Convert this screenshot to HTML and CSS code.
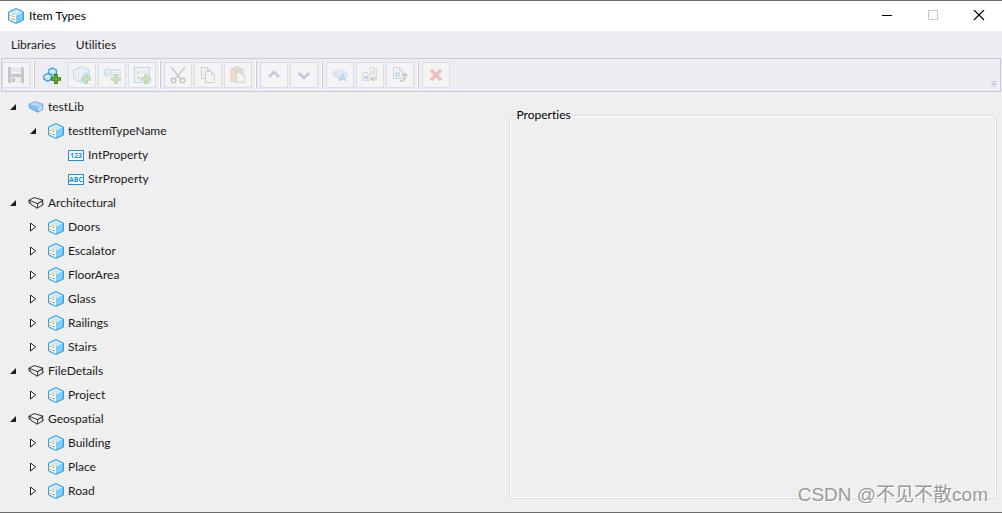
FILE: index.html
```
<!DOCTYPE html>
<html lang="en">
<head>
<meta charset="utf-8">
<title>Item Types</title>
<link rel="stylesheet" href="styles.css">
</head>
<body>
<svg class="defs" aria-hidden="true">
  <symbol id="cube" viewBox="0 0 16 16">
    <path d="M8 .6 15.400 4v8L8 15.400.6 12V4z" fill="#ecf7fe"/>
    <path d="M8 .6 15.400 4 8 7.600.6 4z" fill="#cdeafd"/>
    <path d="M8 7.600 15.400 4v8L8 15.400z" fill="#80cbfc"/>
    <path d="M8 .6 15.400 4v8L8 15.400.6 12V4z" fill="none" stroke="#1c93e3"/>
    <path d="M2 7.500h1.500M2 10.500h1.500" stroke="#f29a2e"/>
    <path d="M4.500 8.500h2" stroke="#f29a2e"/>
    <path d="M4.500 11.500h2" stroke="#4caf50"/>
    <path d="M4.500 6.500h1" stroke="#4caf50"/>
  </symbol>
  <symbol id="book-blue" viewBox="0 0 16 16">
    <path d="M1 5.200 6.500 2.500 15 5.200v5L9.500 13.500 1.500 9.500z" fill="#8fc0f5"/>
    <path d="M1 5.200 6.500 2.600 15 5.200 9.500 8.600z" fill="#b5dafc" stroke="#6ba9ea" stroke-width=".8"/>
    <path d="M9.500 8.800 14.500 6v3.800l-5 3z" fill="#c9e0f9"/>
    <path d="M1 5.200.8 8l8.700 5.300L15 10.200M9.500 8.600v4.500M14.800 5.300v4.700" fill="none" stroke="#5f98e0" stroke-width=".8"/>
  </symbol>
  <symbol id="book" viewBox="0 0 16 16">
    <path d="M1 5.200 6 2.600l9 2.500-5.200 3.600zM1 5.200v2.600l8 5.500 6-3.600V8M9.800 8.700 15 5.200M1 5.200l1.800 3.600M9.800 8.700l-.6 4.300M14.800 5.200l-.5 4.500" fill="none" stroke="#333"/>
  </symbol>
  <symbol id="open" viewBox="0 0 8 8"><path d="M7 1v6H1z" fill="#1c1c1c"/></symbol>
  <symbol id="closed" viewBox="0 0 8 10"><path d="M1.500 1v8l5-4z" fill="#fff" stroke="#222"/></symbol>
  <symbol id="plus" viewBox="0 0 8 8"><path d="M3 .5h2V3h2.500v2H5v2.500H3V5H.5V3H3z" fill="#65b832" stroke="#397e17" stroke-width=".9"/></symbol>
  <symbol id="page" viewBox="0 0 10 12"><path d="M.5.5h6l3 3v8h-9z" fill="#f1f1f1" stroke="#777"/><path d="M6.500.5v3h3" fill="none" stroke="#777"/></symbol>
</svg>
<div class="window">
  <header class="titlebar">
    <svg class="app-icon"><use href="#cube"/></svg>
    <h1 class="title">Item Types</h1>
    <button class="caption" aria-label="Minimize"><svg viewBox="0 0 12 12"><path d="M1 5.500h10" stroke="#000"/></svg></button>
    <button class="caption" aria-label="Maximize" disabled><svg viewBox="0 0 12 12"><path d="M1.500.5h9v9h-9z" fill="none" stroke="#c8c8c8"/></svg></button>
    <button class="caption" aria-label="Close"><svg viewBox="0 0 12 12"><path d="m1 0 10 10M11 0 1 10" stroke="#000" stroke-width="1.200"/></svg></button>
  </header>
  <nav class="menubar">
    <button class="menu">Libraries</button>
    <button class="menu">Utilities</button>
  </nav>
  <div class="toolbar" role="toolbar" aria-label="Item type tools">
    <button class="tool" disabled aria-label="Save"><svg viewBox="0 0 18 18"><path d="M1 1h15l1 1v15H1z" fill="#555"/><path d="M4 1h10v7H4z" fill="#e9e9e9"/><path d="M4 3h10M4 5h10" stroke="#bbb"/><path d="M4 11h10v6H4z" fill="#ddd"/><path d="M5 12h3v4H5z" fill="#444"/></svg></button>
    <span class="sep"></span>
    <button class="tool" aria-label="Add library"><svg viewBox="0 0 18 18"><g fill="#c9e9fd" stroke="#2494e6" stroke-width="1.200"><path d="m9.500 2 3.800 1.800v4L9.500 9.600 5.800 7.800v-4z"/><path d="m4.800 7.500 3.700 1.800v4l-3.700 1.800L1 13.300v-4z"/><path d="m10 8 3 1.500v3l-3 1.500-2-1z"/></g><path d="m6.500 5 3 1.500V9M1.800 10.600l3 1.400v2" fill="none" stroke="#fff"/><path d="M8 7h1.500M3.500 12.500H5" stroke="#eca94e"/><use href="#plus" x="8" y="8" width="10" height="10"/></svg></button>
    <button class="tool" disabled aria-label="Add item type"><svg viewBox="0 0 18 18"><use href="#cube" width="17" height="17"/><use href="#plus" x="8" y="8" width="10" height="10"/></svg></button>
    <button class="tool" disabled aria-label="Add property"><svg viewBox="0 0 18 18"><path d="M7.500 4H17v5H7.500" fill="#e9f6ff" stroke="#2d98df" stroke-width="1.200"/><circle cx="4.500" cy="6.500" r="3.500" fill="#d6efff" stroke="#2d98df" stroke-width="1.200"/><circle cx="4.500" cy="6.500" r="1.500" fill="#f29a2e"/><path d="M10 6.500h4" stroke="#f29a2e"/><use href="#plus" x="8" y="8" width="10" height="10"/></svg></button>
    <button class="tool" disabled aria-label="Add property set"><svg viewBox="0 0 18 18"><path d="M1.500 1.500h15v15h-15z" fill="#e0f3ff" stroke="#2d98df" stroke-width="1.200"/><path d="M4 6h3M4 12h3" stroke="#ee7b30" stroke-width="2.500"/><path d="M9 6h6M9 12h3" stroke="#ee9b45"/><use href="#plus" x="8" y="8" width="10" height="10"/></svg></button>
    <span class="sep"></span>
    <button class="tool" disabled aria-label="Cut"><svg viewBox="0 0 18 18"><path d="m2 1 10 12M16 1 6 13" stroke="#666" stroke-width="1.600"/><circle cx="4.500" cy="14.500" r="2.300" fill="none" stroke="#555" stroke-width="1.500"/><circle cx="13.500" cy="14.500" r="2.300" fill="none" stroke="#555" stroke-width="1.500"/></svg></button>
    <button class="tool" disabled aria-label="Copy"><svg viewBox="0 0 18 18"><use href="#page" x="2" y="1" width="10" height="12"/><use href="#page" x="6" y="5" width="10" height="12"/></svg></button>
    <button class="tool" disabled aria-label="Paste"><svg viewBox="0 0 18 18"><path d="M2 2.500h12v13H2z" fill="#e6a252" stroke="#b98145"/><path d="M5 4V2h1.500V1h3v1H11v2z" fill="#ddd" stroke="#666"/><use href="#page" x="7" y="6" width="9" height="11"/></svg></button>
    <span class="sep"></span>
    <button class="tool" disabled aria-label="Move up"><svg viewBox="0 0 18 18"><path d="m4 11 5-5 5 5" fill="none" stroke="#3a5fae" stroke-width="2.600"/></svg></button>
    <button class="tool" disabled aria-label="Move down"><svg viewBox="0 0 18 18"><path d="m4 7 5 5 5-5" fill="none" stroke="#3a5fae" stroke-width="2.600"/></svg></button>
    <span class="sep"></span>
    <button class="tool" disabled aria-label="Rename library"><svg viewBox="0 0 18 18"><use href="#book-blue" x="1" y="1" width="16" height="16"/><path d="m8.500 15 3-7 3 7M9.500 13h4" fill="none" stroke="#1c88e0" stroke-width="1.600"/></svg></button>
    <button class="tool" disabled aria-label="Replace"><svg viewBox="0 0 18 18"><use href="#page" x="9" y="1" width="7" height="8"/><use href="#page" x="1" y="6" width="8" height="9"/><path d="M3 10h4v3H3z" fill="#3778dd"/><path d="M11 5h3v2h-3z" fill="#888"/><path d="M15 10v3h-5m2.500-2L10 13l2.500 2" fill="none" stroke="#444" stroke-width="1.200"/></svg></button>
    <button class="tool" disabled aria-label="Export"><svg viewBox="0 0 18 18"><use href="#page" x="2" y="1" width="10" height="12"/><path d="M4 6h5v5H4z" fill="#69b6eb"/><path d="M9 15q6 1 5-7m-2.500 2L14 7.500l2.500 2.500" fill="none" stroke="#444" stroke-width="1.400"/></svg></button>
    <span class="sep"></span>
    <button class="tool" disabled aria-label="Delete"><svg viewBox="0 0 18 18"><path d="m4 4 10 10M14 4 4 14" stroke="#e23434" stroke-width="3.600"/></svg></button>
    <svg class="overflow" viewBox="0 0 6 6"><path d="M0 .5h6" stroke="#c8c8d2"/><path d="M0 2h6L3 6z" fill="#c8c8d2"/></svg>
  </div>
  <main class="content">
    <ul class="tree" role="tree" aria-label="Item types">
      <li><div class="row"><svg class="arrow"><use href="#open"/></svg><svg class="icon"><use href="#book-blue"/></svg>testLib</div>
        <ul>
          <li><div class="row"><svg class="arrow"><use href="#open"/></svg><svg class="icon"><use href="#cube"/></svg>testItemTypeName</div>
            <ul>
              <li><div class="row"><span class="arrow"></span><span class="badge">123</span>IntProperty</div></li>
              <li><div class="row"><span class="arrow"></span><span class="badge">ABC</span>StrProperty</div></li>
            </ul>
          </li>
        </ul>
      </li>
      <li><div class="row"><svg class="arrow"><use href="#open"/></svg><svg class="icon"><use href="#book"/></svg>Architectural</div>
        <ul>
          <li><div class="row"><svg class="arrow shut"><use href="#closed"/></svg><svg class="icon"><use href="#cube"/></svg>Doors</div></li>
          <li><div class="row"><svg class="arrow shut"><use href="#closed"/></svg><svg class="icon"><use href="#cube"/></svg>Escalator</div></li>
          <li><div class="row"><svg class="arrow shut"><use href="#closed"/></svg><svg class="icon"><use href="#cube"/></svg>FloorArea</div></li>
          <li><div class="row"><svg class="arrow shut"><use href="#closed"/></svg><svg class="icon"><use href="#cube"/></svg>Glass</div></li>
          <li><div class="row"><svg class="arrow shut"><use href="#closed"/></svg><svg class="icon"><use href="#cube"/></svg>Railings</div></li>
          <li><div class="row"><svg class="arrow shut"><use href="#closed"/></svg><svg class="icon"><use href="#cube"/></svg>Stairs</div></li>
        </ul>
      </li>
      <li><div class="row"><svg class="arrow"><use href="#open"/></svg><svg class="icon"><use href="#book"/></svg>FileDetails</div>
        <ul>
          <li><div class="row"><svg class="arrow shut"><use href="#closed"/></svg><svg class="icon"><use href="#cube"/></svg>Project</div></li>
        </ul>
      </li>
      <li><div class="row"><svg class="arrow"><use href="#open"/></svg><svg class="icon"><use href="#book"/></svg>Geospatial</div>
        <ul>
          <li><div class="row"><svg class="arrow shut"><use href="#closed"/></svg><svg class="icon"><use href="#cube"/></svg>Building</div></li>
          <li><div class="row"><svg class="arrow shut"><use href="#closed"/></svg><svg class="icon"><use href="#cube"/></svg>Place</div></li>
          <li><div class="row"><svg class="arrow shut"><use href="#closed"/></svg><svg class="icon"><use href="#cube"/></svg>Road</div></li>
        </ul>
      </li>
    </ul>
    <fieldset class="properties"><legend>Properties</legend></fieldset>
  </main>
  <div class="watermark">CSDN @不见不散com</div>
</div>
</body>
</html>
```
FILE: styles.css
```
* { box-sizing: border-box; }

body {
  margin: 0;
  background: #efefef;
  color: #1a1a1a;
  font: 12px/16px Lato, "Open Sans", sans-serif;
  font-variant-ligatures: none;
}

button { padding: 0; border: 0; background: none; color: inherit; font: inherit; }
ul { margin: 0; padding: 0; list-style: none; }
svg { display: block; flex: none; }
.defs { position: absolute; width: 0; height: 0; }

.window {
  position: relative;
  display: flex;
  flex-direction: column;
  min-height: 100vh;
  border-top: 1px solid #6b696b;
  border-bottom: 1px solid #6b696b;
}

.titlebar {
  display: flex;
  align-items: center;
  height: 30px;
  padding-left: 8px;
  background: #fff;
}
.app-icon { width: 16px; height: 16px; }
.title { flex: 1; margin: 0 0 0 5px; font-size: 12px; font-weight: 400; color: #000; }
.caption { display: flex; align-items: center; justify-content: center; width: 46px; height: 30px; }
.caption svg { width: 12px; height: 12px; }

.menubar {
  display: flex;
  gap: 20px;
  height: 27px;
  padding: 0 11px;
  background: #eeedf2;
}

.toolbar {
  display: flex;
  align-items: center;
  gap: 2px;
  height: 34px;
  margin: 0 1px;
  border: 1px solid #c9c9de;
  background: #eeedf2;
}
.tool {
  display: flex;
  align-items: center;
  justify-content: center;
  width: 28px;
  height: 26px;
}
.tool svg { width: 18px; height: 18px; }
.tool:disabled { border: 1px solid #dcdce8; background: #f4f4f4; }
.tool:disabled svg { opacity: 0.28; }
.sep {
  width: 2px;
  height: 28px;
  margin: 0 1px;
  border-left: 1px solid #fff;
  border-right: 1px solid #c9c9de;
}
.overflow { align-self: flex-end; width: 6px; height: 6px; margin: 0 3px 4px auto; }

.content {
  display: grid;
  grid-template-columns: 1fr 1fr;
  flex: 1;
  padding: 3px 5px 8px 8px;
}
.tree ul { padding-left: 20px; }
.row { display: flex; align-items: center; height: 24px; }
.arrow { width: 10px; height: 8px; margin-right: 10px; }
.arrow.shut { height: 10px; }
.icon { width: 16px; height: 16px; margin-right: 4px; }
.badge {
  display: flex;
  justify-content: center;
  width: 16px;
  height: 11px;
  margin-right: 4px;
  border: 1px solid #1a8fe3;
  background: #fff;
  color: #1a8fe3;
  font: bold 7px/9px "Open Sans", sans-serif;
}

.properties {
  min-width: 0;
  margin: 12px 0 5px 6px;
  padding: 0 6px;
  border: 1px solid #d5dfe5;
  border-radius: 3px;
  box-shadow: inset 1px 1px #fff, inset -1px -1px #fff;
}
.properties legend { padding: 0 1px; line-height: 16px; color: #000; }

.watermark {
  position: absolute;
  right: 14px;
  bottom: 5px;
  color: #999;
  font: 19px/24px "Liberation Sans", "Noto Sans CJK SC", sans-serif;
  text-shadow: 1px 1px #fff;
}
```
